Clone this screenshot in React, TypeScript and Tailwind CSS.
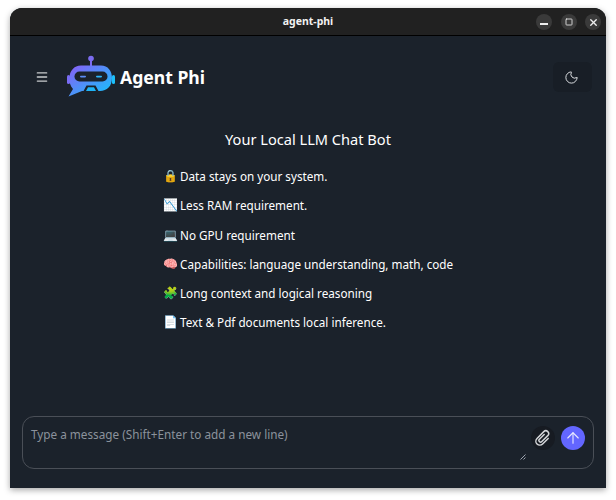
import { ArrowUp, Menu, Moon, Square, X } from "lucide-react";

const features = [
  { icon: "🔒", text: "Data stays on your system." },
  { icon: "📉", text: "Less RAM requirement." },
  { icon: "💻", text: "No GPU requirement" },
  { icon: "🧠", text: "Capabilities: language understanding, math, code" },
  { icon: "🧩", text: "Long context and logical reasoning" },
  { icon: "📄", text: "Text & Pdf documents local inference." },
];

function Logo() {
  return (
    <svg width="48" height="44" viewBox="0 0 48 44">
      <defs>
        <linearGradient id="bot" x1="0" y1="0" x2="1" y2="1">
          <stop offset="0" stopColor="#8b5cf6" />
          <stop offset="1" stopColor="#0ec8fb" />
        </linearGradient>
      </defs>
      <circle cx="24" cy="3.5" r="2.8" fill="#7c6cf0" />
      <rect x="23" y="5" width="2" height="7" fill="#7c6cf0" />
      <rect x="0" y="20" width="3" height="9" rx="1.5" fill="#7a6cf4" />
      <rect x="45" y="20" width="3" height="9" rx="1.5" fill="#1cc0fa" />
      <path
        d="M14 10.5H34C41 10.5 45 16 45 23C45 31 40 36 33 36H15L1.5 41.5L6 34C3 31 2.5 27 2.5 23C2.5 16 7 10.5 14 10.5Z"
        fill="url(#bot)"
      />
      <rect x="7.5" y="16.5" width="33" height="10" rx="5" fill="#1b222b" />
      <rect x="13" y="20.8" width="6" height="1.6" rx="0.8" fill="#5b8cf5" />
      <rect x="29" y="20.8" width="6" height="1.6" rx="0.8" fill="#2cb5f8" />
      <path d="M16 37L19.5 30.5H28.5L32 37Z" fill="#1b222b" />
      <path d="M19 36L21 32.2H27L29 36Z" fill="#1eb4f7" />
    </svg>
  );
}

function Clip() {
  return (
    <svg width="18" height="18" viewBox="0 0 16 16" fill="none">
      <g transform="rotate(45 8 8)" stroke="#d5d7da" strokeWidth="1.3" strokeLinecap="round">
        <path d="M6.5 5V11a1.5 1.5 0 0 0 3 0V3.5a2.5 2.5 0 0 0 -5 0V12a3.5 3.5 0 0 0 7 0V5" />
      </g>
    </svg>
  );
}

function WindowButton({ children }: any) {
  return (
    <div className="flex h-4 w-4 items-center justify-center rounded-full bg-[#3a3a3a] text-[#efefef]">
      {children}
    </div>
  );
}

export default function App() {
  return (
    <div className="h-[500px] w-[616px] bg-white pt-2 pr-2.5 pb-3 pl-2.5 font-['Noto_Sans',sans-serif]">
      <div className="flex h-[480px] w-[596px] flex-col overflow-hidden rounded-t-xl bg-[#1b222b] shadow-[0_2px_6px_rgba(0,0,0,0.35)]">
        <div className="relative flex h-7 shrink-0 items-center justify-center border-b border-black bg-[#212121]">
          <span className="text-[10.5px] font-bold text-[#f2f2f2]">agent-phi</span>
          <div className="absolute top-1.5 right-[5px] flex gap-[8.5px]">
            <WindowButton><div className="mt-1 h-[2px] w-2 bg-[#efefef]" /></WindowButton>
            <WindowButton><Square size={8} strokeWidth={2.5} /></WindowButton>
            <WindowButton><X size={11} strokeWidth={3} /></WindowButton>
          </div>
        </div>

        <div className="flex h-[82px] shrink-0 items-center justify-between pr-3.5 pl-[25px]">
          <div className="flex items-center">
            <Menu size={14} strokeWidth={2.25} className="text-[#c9cbce]" />
            <div className="ml-[18px]"><Logo /></div>
            <span className="ml-[5px] text-[17.6px] font-bold text-white">Agent Phi</span>
          </div>
          <div className="flex h-[30px] w-[39px] items-center justify-center rounded-md bg-[#181e26] pr-0.5">
            <Moon size={15} strokeWidth={1.5} className="text-[#e5e7eb]" />
          </div>
        </div>

        <div className="flex-1">
          <h1 className="mt-[9px] text-center text-[14.6px] leading-6 text-white">Your Local LLM Chat Bot</h1>
          <ul className="mt-[15px] ml-[153px] flex flex-col gap-[9.3px]">
            {features.map((f) => (
              <li key={f.text} className="flex h-5 items-center text-[11.7px] leading-5 text-white">
                <span className="w-[17px] text-[12px]">{f.icon}</span>
                <span>{f.text}</span>
              </li>
            ))}
          </ul>
        </div>

        <div className="relative mx-3 mb-[19px] h-[53px] rounded-xl border border-[#4a4f57]">
          <p className="pt-[7px] pl-2 text-[11.75px] leading-5 text-[#8b929c]">Type a message (Shift+Enter to add a new line)</p>
          <div className="absolute top-[9px] right-[8px] flex items-center gap-1.5">
            <div className="flex h-6 w-6 items-center justify-center rounded-full bg-[#171b22]">
              <Clip />
            </div>
            <div className="flex h-6 w-6 items-center justify-center rounded-full bg-[#6366ff]">
              <ArrowUp size={18} strokeWidth={1.5} className="text-[#e6e6ff]" />
            </div>
          </div>
          <svg className="absolute right-[67px] bottom-[8px]" width="6" height="6" viewBox="0 0 6 6">
            <path d="M0.5 5.5L5.5 0.5M3.5 5.5L5.5 3.5" stroke="#9ca3af" strokeWidth="1" />
          </svg>
        </div>
      </div>
    </div>
  );
}
